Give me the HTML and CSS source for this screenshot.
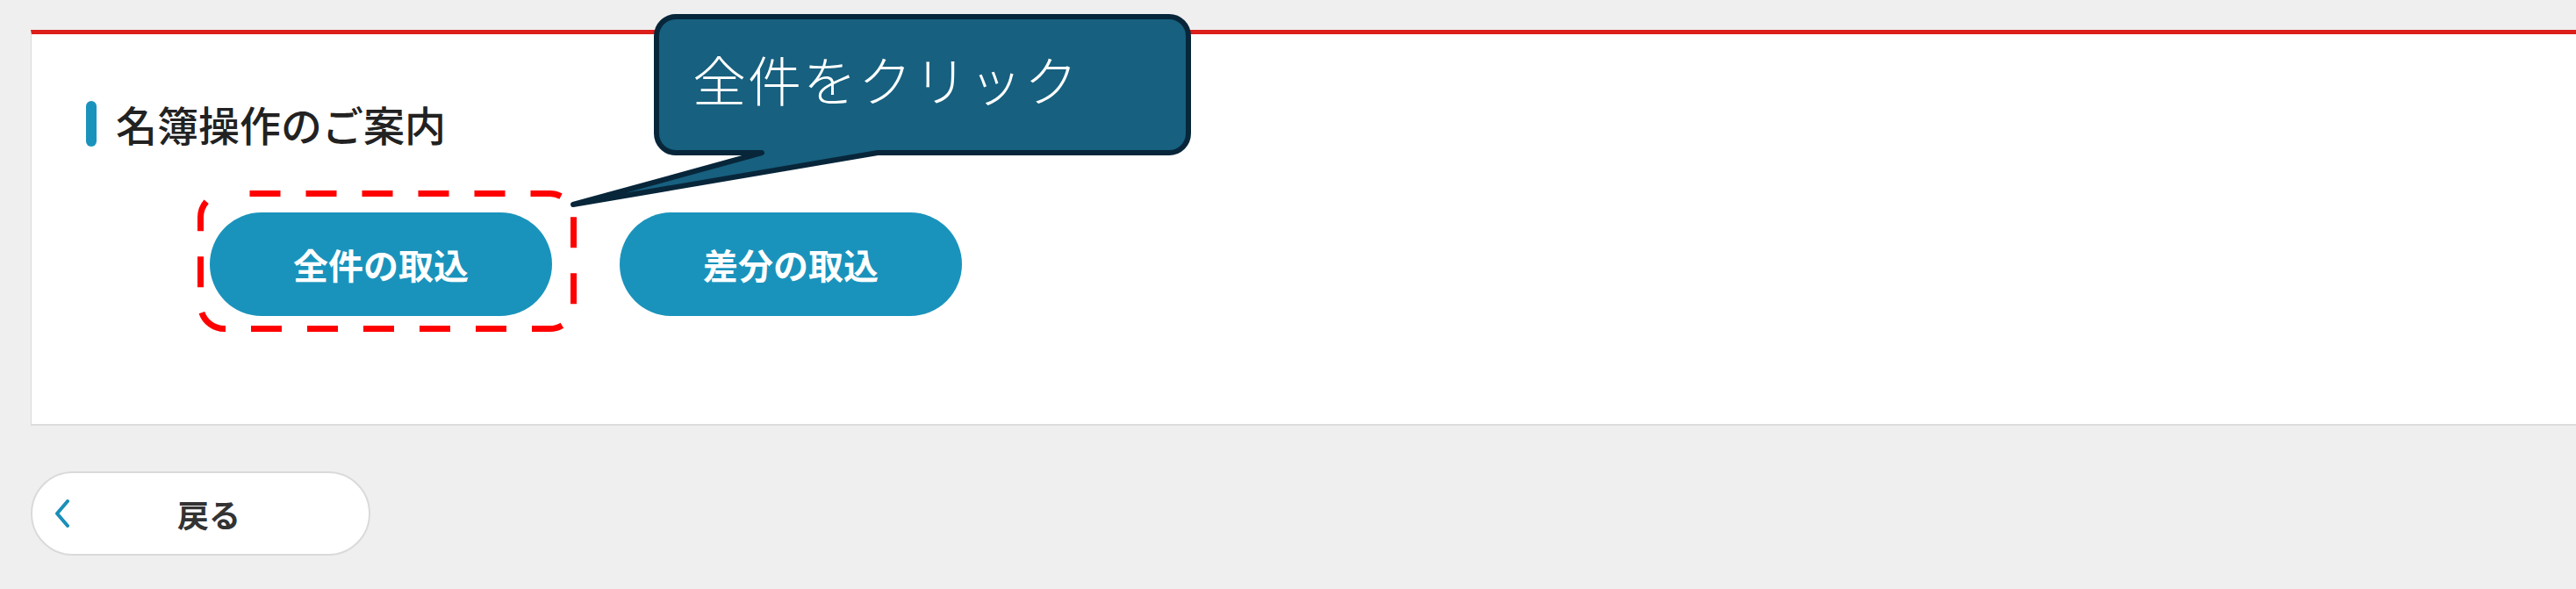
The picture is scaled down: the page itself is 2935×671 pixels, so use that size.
FILE: index.html
```html
<!DOCTYPE html>
<html lang="ja">
<head>
    <meta charset="utf-8">
    <title>名簿操作のご案内</title>
    <link rel="stylesheet" href="styles.css">
</head>
<body>
    <div class="page">
        <div class="card">
            <h2 class="card-title"><span class="title-bar"></span>名簿操作のご案内</h2>

            <div class="actions">
                <div class="action-wrap">
                    <button type="button" class="action-btn">全件の取込</button>
                    <!-- annotation: dashed highlight -->
                    <svg class="highlight" width="432" height="161" viewBox="0 0 432 161">
                        <rect x="3.5" y="3.5" width="425" height="154" rx="27" ry="27"
                              fill="none" stroke="#ff0000" stroke-width="7"
                              stroke-dasharray="35 29" stroke-dashoffset="35"/>
                    </svg>
                </div>
                <button type="button" class="action-btn">差分の取込</button>
            </div>
        </div>

        <button type="button" class="back-btn">
            <svg class="back-icon" width="18" height="32" viewBox="0 0 18 32">
                <path d="M15 2 L3 16 L15 30" fill="none" stroke="#1a8fb8" stroke-width="4" stroke-linecap="round" stroke-linejoin="round"/>
            </svg>
            <span class="back-label">戻る</span>
        </button>

        <!-- annotation: callout balloon -->
        <svg class="callout-shape" width="1400" height="260" viewBox="0 0 1400 260">
            <path d="M770 19 H1332 A22 22 0 0 1 1354 41 V152 A22 22 0 0 1 1332 174 H1000 L653 233 L868 174 H770 A22 22 0 0 1 748 152 V41 A22 22 0 0 1 770 19 Z"
                  fill="#17607f" stroke="#08263a" stroke-width="6" stroke-linejoin="round"/>
        </svg>
        <div class="callout-text">全件をクリック</div>
    </div>
</body>
</html>
```

FILE: styles.css
```css
body {
    margin: 0;
    background-color: #efefef;
    font-family: "Noto Sans CJK JP", "Noto Sans", sans-serif;
    color: #222;
    overflow: hidden;
}

.page {
    position: relative;
    box-sizing: border-box;
    padding: 34px 0 0 35px;
    height: 671px;
}

.card {
    background-color: #fff;
    border-top: 5px solid #dc1f1a;
    border-left: 1px solid #dcdcdc;
    border-bottom: 2px solid #dcdcdc;
    padding: 76px 0 123px 62px;
}

.card-title {
    display: flex;
    align-items: center;
    gap: 22px;
    margin: 0;
    font-size: 47px;
    font-weight: 500;
    line-height: 52px;
    color: #222;
}

.title-bar {
    display: block;
    width: 12px;
    height: 52px;
    border-radius: 6px;
    background-color: #1a93bc;
}

.actions {
    display: flex;
    gap: 77px;
    margin: 75px 0 0 141px;
}

.action-wrap {
    position: relative;
}

.action-btn {
    display: block;
    width: 390px;
    height: 118px;
    border: none;
    border-radius: 59px;
    background-color: #1a93bc;
    color: #fff;
    font-family: inherit;
    font-size: 40px;
    font-weight: bold;
    cursor: pointer;
}

.highlight {
    position: absolute;
    left: -14px;
    top: -25px;
}

.back-btn {
    display: flex;
    align-items: center;
    width: 387px;
    height: 96px;
    margin-top: 52px;
    padding: 0 24px 0 25px;
    background-color: #fff;
    border: 2px solid #dadada;
    border-radius: 48px;
    font-family: inherit;
    cursor: pointer;
}

.back-icon {
    flex: none;
}

.back-label {
    flex: 1;
    text-align: center;
    font-size: 36px;
    font-weight: bold;
    color: #333;
}

.callout-shape {
    position: absolute;
    left: 0;
    top: 0;
}

.callout-text {
    position: absolute;
    left: 789px;
    top: 59px;
    font-size: 61px;
    font-weight: 300;
    line-height: 1;
    letter-spacing: 2px;
    color: #fff;
}
```
